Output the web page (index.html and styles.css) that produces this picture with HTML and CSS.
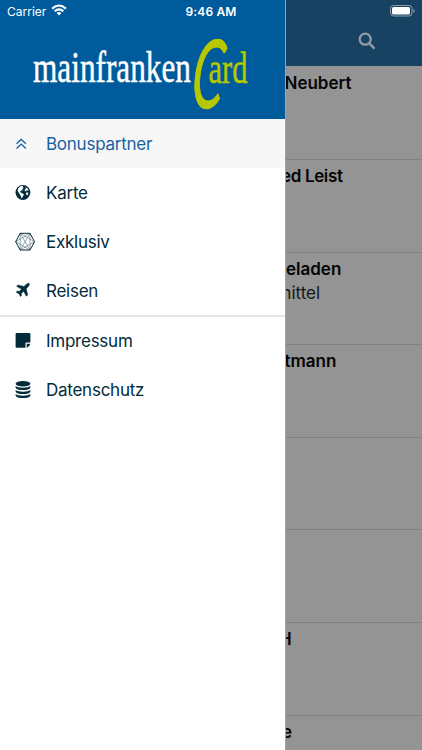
FILE: index.html
```
<!DOCTYPE html>
<html lang="de">
<head>
<meta charset="utf-8">
<title>mainfrankenCard</title>
<link rel="stylesheet" href="styles.css">
</head>
<body>
<div class="statusbar">
  <span class="carrier">Carrier</span>
  <svg class="wifi" width="16" height="12" viewBox="0 0 16 12" fill="none" stroke="#fff" stroke-width="2.1"><path d="M1.1 4.6Q8-1.6 14.9 4.6M3.6 7.2Q8 3.4 12.4 7.2"/><path d="M5.600 9Q8 7.100 10.400 9L8 11.500z" fill="#fff" stroke="none"/></svg>
  <span class="clock">9:46 AM</span>
  <svg class="battery" width="26" height="12" viewBox="0 0 26 12"><rect x=".5" y=".5" width="21.5" height="10.5" rx="3" fill="none" stroke="#8b9fae"/><rect x="2" y="2" width="18" height="7.5" rx="1.6" fill="#fff"/><path d="M23.300 4v4q1.400-.5 1.400-2t-1.400-2z" fill="#8b9fae"/></svg>
</div>
<div class="app">
  <nav class="menu">
    <header class="brand">
      <svg width="285" height="119" viewBox="0 0 285 119">
        <text x="33" y="82" class="word" textLength="158" lengthAdjust="spacingAndGlyphs">mainfranken</text>
        <text transform="translate(190 107.500) skewX(-5) scale(.53 1)" class="swoosh">C</text>
        <text x="208.500" y="82.500" class="word green" textLength="39" lengthAdjust="spacingAndGlyphs">ard</text>
      </svg>
    </header>
    <a class="item active"><svg width="20" height="20" viewBox="0 0 20 20" fill="none" stroke="currentColor" stroke-width="1.35"><path d="M1.500 9.800l4.700-4.300 4.700 4.300M1.500 14.400l4.700-4.300 4.700 4.300"/></svg><span>Bonuspartner</span></a>
    <a class="item"><svg width="20" height="20" viewBox="0 0 20 20"><circle cx="7.900" cy="9.500" r="7.400" fill="currentColor"/><path fill="#fff" d="M3.200 5.300l2.400-2.100 2.700-.5-.8 1.500 1.400.6-1.700 1.300.9 1.100-2.300.4-.8 1.700 2 .7 2 1.500-1.300 2.300-1.100 1.800-1.100-3-1.600-2.700-1.300-2.100zM10.500 4.200l2.200 1.400.9 2.300-1.700-.7-1.300 1.200-1.200-1.500 1.400-.8zM10.800 9.800l2.600-.4-.9 3.200-1.200-.8z"/></svg><span>Karte</span></a>
    <a class="item"><svg width="20" height="20" viewBox="0 0 20 20" fill="none" stroke="currentColor"><path stroke-width="1" d="M5.200 1.300h9.800l4.500 8.400-4.500 8.300H5.200L.7 9.700z"/><path stroke-width=".4" d="M5.200 1.300L15 18M15 1.300L5.200 18M.7 9.700L15 1.300M.7 9.700L15 18M19.500 9.700L5.200 1.300M19.500 9.700L5.200 18M5.200 1.300V18M15 1.300V18"/></svg><span>Exklusiv</span></a>
    <a class="item"><svg width="20" height="20" viewBox="0 0 20 20"><path fill="currentColor" stroke="currentColor" stroke-width=".5" d="M14.200 2.400q.8 1.400-1.300 3.600l-1.700 1.700 1.500 6.200-1.300 1.300-2.800-5-2.300 2.300.3 1.900-1.100 1.100-1.500-2.800L1.200 11.200l1.100-1.100 2 .3 2.200-2.300-4.900-2.800 1.200-1.300L9 5.500l1.800-1.700q2-2 3.400-1.400z"/></svg><span>Reisen</span></a>
    <hr class="divider">
    <a class="item"><svg width="20" height="20" viewBox="0 0 20 20"><path fill="currentColor" d="M1.600 2h12.800q1 0 1 1v8.500h-3.900q-1 0-1 1v4.200H1.600q-1 0-1-1V3q0-1 1-1zM11.700 12.700h3.600q-.2 1-.9 1.800l-1.100 1.200q-.7.800-1.600.9z"/></svg><span>Impressum</span></a>
    <a class="item"><svg width="20" height="20" viewBox="0 0 20 20" fill="currentColor"><ellipse cx="8" cy="3.700" rx="7.400" ry="2.800"/><path d="M.6 6q2.200 1.700 7.400 1.700T15.400 6v1.400Q14.400 10 8 10T.6 7.400zM.6 10q2.200 1.700 7.400 1.700t7.400-1.700v1.400Q14.400 14 8 14T.6 11.400zM.6 14q2.200 1.700 7.400 1.700t7.400-1.700v1.400Q14.400 18 8 18T.6 15.400z"/></svg><span>Datenschutz</span></a>
  </nav>
  <main class="content">
    <header class="toolbar"><svg width="18" height="18" viewBox="0 0 18 18" fill="none" stroke="#8f9ba5"><circle cx="7.200" cy="7.200" r="5.500" stroke-width="2.300"/><path d="M11.300 11.300l4.500 4.500" stroke-width="2.600" stroke-linecap="round"/></svg></header>
    <section class="row"><h2 class="t1">Neubert</h2></section>
    <section class="row"><h2 class="t2">ed Leist</h2></section>
    <section class="row"><h2 class="t3">eladen</h2><p>mittel</p></section>
    <section class="row"><h2 class="t4">tmann</h2></section>
    <section class="row"></section>
    <section class="row"></section>
    <section class="row"><h2 class="t5">H</h2></section>
    <section class="row"><h2 class="t6">e</h2></section>
  </main>
</div>
</body>
</html>
```
FILE: styles.css
```
* { box-sizing: border-box; }
body { margin: 0; font-family: Inter, Roboto, sans-serif; overflow: hidden; }
.app { display: flex; width: 422px; height: 750px; overflow: hidden; }

.statusbar {
  position: absolute; z-index: 2; top: 0; left: 0; width: 422px; height: 22px;
  display: flex; align-items: center; color: #fff; padding: 0 6px 0 7px;
}
.carrier { font-size: 12px; width: 44px; white-space: nowrap; }
.wifi { margin-top: -2px; }
.clock { font-size: 12px; font-weight: 600; margin-left: 118.5px; letter-spacing: .15px; white-space: nowrap; }
.battery { margin-left: auto; margin-top: -1px; }

.menu { width: 285px; flex: none; background: #fff; }
.brand { height: 119px; background: #005b9c; }
.brand svg { display: block; }
.word { font-family: "Liberation Serif", serif; font-size: 45px; fill: #fff; stroke: #fff; stroke-width: .5px; }
.word.green { fill: #b8c800; stroke: #b8c800; }
.swoosh { font-family: Lato, sans-serif; font-style: italic; font-size: 95px; fill: #b8c800; stroke: #b8c800; stroke-width: 1px; }
.item { display: flex; align-items: center; height: 49px; padding-left: 15px; color: #032b3a; font-size: 17px; letter-spacing: -.25px; }
.item svg { flex: none; }
.item span { margin-left: 11px; white-space: nowrap; }
.item.active { background: #f7f7f7; color: #1762a3; }
.divider { margin: 0 0 -1px; border: 0; height: 2px; background: #e5e5e5; }

.content { flex: 1; background: #949494; overflow: hidden; border-left: 1px solid #a4a4a4; }
.toolbar { height: 66px; margin-left: -1px; padding: 32px 0 0 73px; background: #174262; }
.row { height: 92.6px; padding-top: 5px; border-bottom: 1px solid #828282; white-space: nowrap; }
.row:nth-child(2) { height: 94px; padding-top: 6px; }
h2 { margin: 0; font-size: 17px; line-height: 22px; font-weight: 600; color: #050505; }
p { margin: 2px 0 0 -9.5px; font-size: 17px; line-height: 22px; color: #161616; }
.t1 { margin-left: -1.5px; }
.t2 { margin-left: -5px; letter-spacing: -.35px; }
.t3 { margin-left: 0; }
.t4 { margin-left: -1.5px; }
.t5 { margin-left: -7px; }
.t6 { margin-left: -4px; }
```
